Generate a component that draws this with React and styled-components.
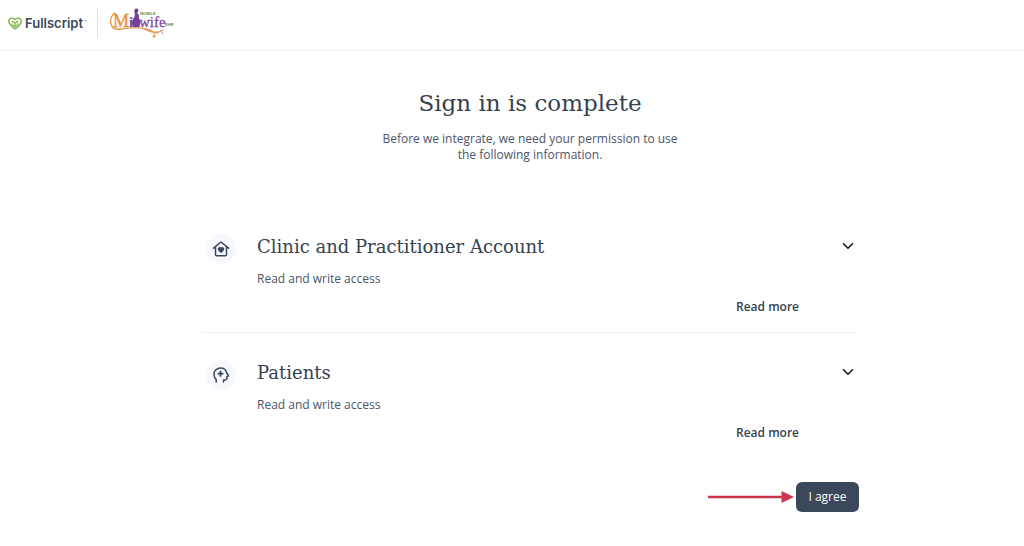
import React from 'react';
import styled, { createGlobalStyle } from 'styled-components';

const GlobalStyle = createGlobalStyle`
  * {
    box-sizing: border-box;
  }

  body {
    margin: 0;
    background: #ffffff;
    color: #4a5568;
    font-family: 'Open Sans', sans-serif;
    font-size: 12px;
    line-height: 16px;
  }
`;

const Header = styled.header`
  display: flex;
  align-items: center;
  height: 51px;
  padding: 0 8px 4px;
  border-bottom: 1px solid #f3f4f6;
`;

const Brand = styled.div`
  display: flex;
  align-items: center;
  gap: 3px;
  width: 89px;
  color: #3c485a;
  font-family: Inter, sans-serif;
  font-size: 13px;
  font-weight: 600;
`;

const Trademark = styled.sup`
  margin-left: -2px;
  font-size: 4px;
  line-height: 10px;
`;

const Separator = styled.span`
  width: 1px;
  height: 30px;
  margin-right: 12px;
  background: #dfe4ec;
`;

const Main = styled.main`
  max-width: 694px;
  margin: 0 auto;
  padding: 36px 0 32px 36px;
`;

const Intro = styled.div`
  max-width: 310px;
  margin: 0 auto 44px;
  text-align: center;
`;

const Title = styled.h1`
  margin: 0 0 12px;
  color: #36424f;
  font-family: 'DejaVu Serif', serif;
  font-size: 23px;
  font-weight: 400;
  line-height: 32px;
  white-space: nowrap;
`;

const Text = styled.p`
  margin: 0;
`;

const Row = styled.section`
  display: flex;
  align-items: flex-start;
  padding: 27px 5px 17px 5px;
  border-bottom: 1px solid ${({ $last }) => ($last ? 'transparent' : '#f3f4f6')};
`;

const IconCircle = styled.div`
  display: flex;
  align-items: center;
  justify-content: center;
  flex: none;
  width: 30px;
  height: 30px;
  margin-right: 21px;
  border-radius: 50%;
  background: #f7f8fd;
`;

const RowBody = styled.div`
  display: flex;
  flex: 1;
  flex-direction: column;
`;

const RowTitle = styled.h2`
  margin: 0 0 11px;
  color: #36424f;
  font-family: 'DejaVu Serif', serif;
  font-size: 18px;
  font-weight: 400;
  line-height: 26px;
`;

const ReadMore = styled.button`
  align-self: flex-end;
  margin: 12px 43px 0 0;
  padding: 0;
  border: 0;
  background: none;
  color: #36424f;
  font: inherit;
  font-weight: 600;
  cursor: pointer;
`;

const Toggle = styled.button`
  display: flex;
  align-items: center;
  height: 24px;
  padding: 0;
  border: 0;
  background: none;
  color: #15181c;
  cursor: pointer;
`;

const Actions = styled.div`
  display: flex;
  align-items: center;
  justify-content: flex-end;
  gap: 2px;
  margin-top: 23px;
`;

const AgreeButton = styled.button`
  width: 63px;
  height: 30px;
  padding: 0;
  border: 0;
  border-radius: 6px;
  background: #3b475b;
  color: #ffffff;
  font: inherit;
  cursor: pointer;
`;

const LeafHeart = () => (
  <svg width="14" height="13" viewBox="0 0 14 13" fill="none" stroke="#82b548" strokeWidth="1.4" strokeLinecap="round" strokeLinejoin="round">
    <path d="M7 2.6C5.6.9 3.1.6 1.8 1.9.4 3.4.8 5.9 2.3 7.9 3.6 9.6 5.3 10.8 7 12c1.7-1.2 3.4-2.4 4.7-4.1 1.5-2 1.900-4.500.5-6C10.900.6 8.400.9 7 2.600" />
    <path d="M7 11V5.500M7 6C5.800 5.900 4.800 5.200 4.500 4M7 6c1.200-.1 2.200-.8 2.500-2M7 9C5.700 9 4.500 8.300 4 7M7 9c1.300 0 2.500-.7 3-2" strokeWidth="1.200" />
  </svg>
);

const MidwifeLogo = () => (
  <svg width="64" height="32" viewBox="0 0 64 32" fill="none" role="img" aria-label="Mobile Midwife EHR">
    <path d="M5 6C2 8 0 12 1 17c1 4 5 6 11 5 8-1 15-3 23 0 4 2 8 4 13 3" stroke="#e79a4d" strokeWidth="1.400" strokeLinecap="round" />
    <path d="M35 22c5 0 9 2 10 7M46 26c2 0 4-2 7-3M51 24l2 3" stroke="#e08b55" strokeWidth="1" strokeLinecap="round" />
    <circle cx="44" cy="29.500" r="1.200" fill="#e79a4d" />
    <text x="3" y="20" fill="#e5923f" stroke="#e5923f" strokeWidth=".4" fontFamily="Liberation Serif, serif" fontSize="18">M</text>
    <text x="19" y="20" fill="#7d46a0" fontFamily="Liberation Serif, serif" fontSize="15" fontWeight="700">i</text>
    <path d="M25 2c2-1.300 4 .2 3.300 2.300L27 6c2 1 2.500 3 1.800 5 1.500 2 1.700 5 .7 9h-5.500c-2.300-1-2.600-5-1-8 1.400-2 2.200-3 1.800-5-.5-2-.9-4 .2-5z" fill="#70409b" />
    <text x="29" y="20" fill="#7d46a0" stroke="#7d46a0" strokeWidth=".3" fontFamily="Liberation Serif, serif" fontSize="15">wife</text>
    <text x="30" y="8" fill="#5d8e3f" fontFamily="Liberation Sans, sans-serif" fontSize="4" fontWeight="700">MOBILE</text>
    <text x="55" y="19" fill="#5d8e3f" fontFamily="Liberation Sans, sans-serif" fontSize="4" fontWeight="700">EHR</text>
  </svg>
);

const HouseIcon = () => (
  <svg width="18" height="18" viewBox="0 0 18 18" fill="none" stroke="#3b475b" strokeWidth="1.500" strokeLinecap="round" strokeLinejoin="round">
    <path d="M1.500 8.200 9 2l7.500 6.200M3.500 7v7.500c0 .8.500 1.300 1.300 1.300h8.400c.8 0 1.300-.5 1.300-1.300V7" />
    <path d="M9 12.300 6.700 10c-1.200-1.500.9-3.300 2.300-1.700 1.400-1.600 3.500.2 2.300 1.700z" fill="#3b475b" strokeWidth="1.200" />
  </svg>
);

const HeadIcon = () => (
  <svg width="18" height="18" viewBox="0 0 18 18" fill="none" stroke="#3b475b" strokeWidth="1.500" strokeLinecap="round" strokeLinejoin="round">
    <path d="M4.200 16v-2.500C2.800 12.200 2 10.500 2 8.500 2 4.700 4.800 2 8.500 2c3.400 0 5.600 2 6.200 5l1.600 2.500c.2.400 0 .7-.4.800l-1 .3v1.700c0 1.100-.7 1.700-1.700 1.700h-1.700v2" />
    <path d="M8.500 5.500v4.400M6.300 7.700h4.400" strokeWidth="1.800" />
  </svg>
);

const Chevron = () => (
  <svg width="12" height="8" viewBox="0 0 12 8" fill="none" stroke="currentColor" strokeWidth="1.600" strokeLinecap="round" strokeLinejoin="round">
    <path d="m1.500 1.800 4.500 4.400 4.500-4.400" />
  </svg>
);

const Arrow = () => (
  <svg width="86" height="14" viewBox="0 0 86 14" aria-hidden="true">
    <path d="M0 7h76" stroke="#c9364e" strokeWidth="2.400" />
    <path d="M73.500 1v12L86 7z" fill="#c9364e" />
  </svg>
);

const Permission = ({ icon, title, last }) => (
  <Row $last={last}>
    <IconCircle>{icon}</IconCircle>
    <RowBody>
      <RowTitle>{title}</RowTitle>
      <Text>Read and write access</Text>
      <ReadMore type="button">Read more</ReadMore>
    </RowBody>
    <Toggle type="button" aria-label={`Expand ${title}`}>
      <Chevron />
    </Toggle>
  </Row>
);

const App = () => {
  return (
    <>
      <GlobalStyle />
      <Header>
        <Brand>
          <LeafHeart />
          Fullscript
          <Trademark>™</Trademark>
        </Brand>
        <Separator />
        <MidwifeLogo />
      </Header>
      <Main>
        <Intro>
          <Title>Sign in is complete</Title>
          <Text>Before we integrate, we need your permission to use the following information.</Text>
        </Intro>
        <Permission icon={<HouseIcon />} title="Clinic and Practitioner Account" />
        <Permission icon={<HeadIcon />} title="Patients" last />
        <Actions>
          <Arrow />
          <AgreeButton type="button">I agree</AgreeButton>
        </Actions>
      </Main>
    </>
  );
};

export default App;
